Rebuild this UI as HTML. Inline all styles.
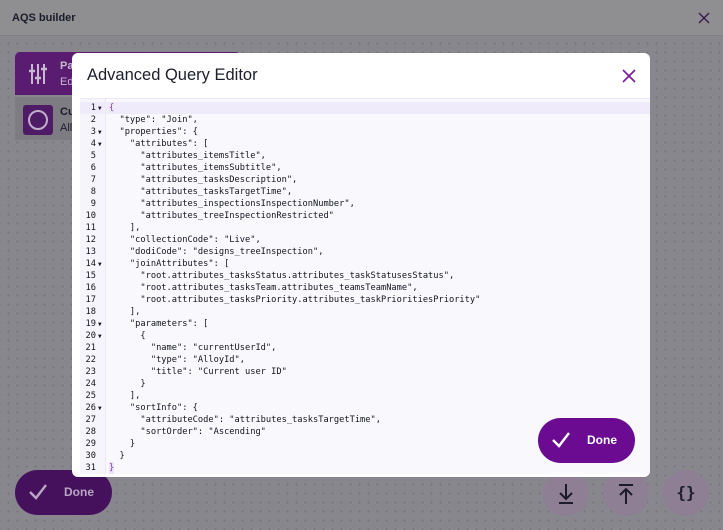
<!DOCTYPE html>
<html><head><meta charset="utf-8"><style>
*{margin:0;padding:0;box-sizing:border-box}
body{width:723px;height:530px;overflow:hidden;position:relative;font-family:"Liberation Sans",sans-serif;background-color:#88878d;background-image:radial-gradient(circle,#75747a 0.8px,transparent 1.1px);background-size:9px 9px;background-position:4px 3px}
.hdr{position:absolute;left:0;top:0;width:723px;height:36px;background:#8f8f92;border-bottom:1px solid #7f7e84}
.hdr .t{position:absolute;left:12px;top:12px;font-size:11px;font-weight:bold;color:#1b1b2b}
.card1{position:absolute;left:15px;top:52px;width:226px;height:43px;background:#5a1c70;border-radius:5px 5px 0 0}
.card2{position:absolute;left:15px;top:97px;width:226px;height:43px;background:#7d7c82}
.modal{position:absolute;left:72px;top:53px;width:578px;height:424px;background:#fff;border-radius:6px;overflow:hidden}
.modal .title{position:absolute;left:15px;top:13px;font-size:16.5px;color:#1d1d2b}
.code{position:absolute;left:8px;top:45px;width:570px;height:376px;background:#f8f8fd;border-top:1px solid #ece8f6}
.gut{position:absolute;left:0;top:0;width:26px;height:100%;background:#f6f5fb;border-right:1px solid #ebe8f3}
.ln{position:absolute;left:0;width:570px;height:12px;font-family:"DejaVu Sans Mono",monospace;font-size:8.7px;line-height:12px;color:#14141f;white-space:pre}
.ln .n{display:inline-block;width:16px;text-align:right}
.ln .a{display:inline-block;width:9px;font-size:6px;padding-left:2px}
.ln .c{position:absolute;left:29px}
.hl{background:#f0ebfa}
.btn{position:absolute;border-radius:23px;color:#fff;font-weight:bold;font-size:12px}
.circ{position:absolute;top:470px;width:46px;height:46px;border-radius:50%;background:#8e7f95;color:#1b1b2b;text-align:center}
</style></head><body>
<div class="hdr"><div class="t">AQS builder</div>
<svg style="position:absolute;left:698px;top:12px" width="12" height="12"><path d="M1 1L11 11M11 1L1 11" stroke="#3c1650" stroke-width="1.4"/></svg></div>
<div class="card1">
<svg style="position:absolute;left:13px;top:11px" width="20" height="22" stroke="#c9b8d2" stroke-width="2" fill="none"><path d="M4 1V21M10 1V21M16 1V21"/><path d="M1 8H7M7 15H13M13 6H19" stroke-width="2.4"/></svg>
<div style="position:absolute;left:45px;top:8px;color:#c8b9d0;font-size:11px;font-weight:bold">Pa</div>
<div style="position:absolute;left:45px;top:24px;color:#c8b9d0;font-size:11px">Ed</div></div>
<div class="card2">
<div style="position:absolute;left:8px;top:8px;width:30px;height:30px;background:#4f1b66;border-radius:3px"></div>
<div style="position:absolute;left:13px;top:13px;width:20px;height:20px;border:2px solid #c0aecb;border-radius:50%"></div>
<div style="position:absolute;left:45px;top:9px;color:#1b1b2b;font-size:11px;font-weight:bold">Cu</div>
<div style="position:absolute;left:45px;top:25px;color:#1b1b2b;font-size:11px">All</div></div>

<div class="btn" style="left:15px;top:470px;width:97px;height:45px;background:#46115c">
<svg style="position:absolute;left:13px;top:13px" width="20" height="18"><path d="M2 9L8 15L18 2" stroke="#b9a6c4" stroke-width="2.4" fill="none"/></svg>
<span style="position:absolute;left:49px;top:15px;color:#b9a6c4">Done</span></div>
<div class="circ" style="left:543px"><svg width="46" height="46"><path d="M23 14V29M17 23L23 29L29 23M16 33H30" stroke="#1b1b2b" stroke-width="2" fill="none"/></svg></div>
<div class="circ" style="left:603px"><svg width="46" height="46"><path d="M23 32V17M17 23L23 17L29 23M16 13H30" stroke="#1b1b2b" stroke-width="2" fill="none" transform="translate(0,2)"/></svg></div>
<div class="circ" style="left:663px;line-height:46px;font-size:16px;font-weight:bold;font-family:'DejaVu Sans Mono',monospace">{}</div>

<div class="modal">
<div class="title">Advanced Query Editor</div>
<svg style="position:absolute;left:550px;top:16px" width="14" height="14"><path d="M1 1L13 13M13 1L1 13" stroke="#7a1aa0" stroke-width="1.6"/></svg>
<div class="code"><div class="gut"></div>
<div class="ln hl" style="top:3px"><span class="n">1</span><span class="a">▼</span><span class="c" style="color:#7a3aa0">{</span></div>
<div class="ln" style="top:15px"><span class="n">2</span><span class="c">  "type": "Join",</span></div>
<div class="ln" style="top:27px"><span class="n">3</span><span class="a">▼</span><span class="c">  "properties": {</span></div>
<div class="ln" style="top:39px"><span class="n">4</span><span class="a">▼</span><span class="c">    "attributes": [</span></div>
<div class="ln" style="top:51px"><span class="n">5</span><span class="c">      "attributes_itemsTitle",</span></div>
<div class="ln" style="top:63px"><span class="n">6</span><span class="c">      "attributes_itemsSubtitle",</span></div>
<div class="ln" style="top:75px"><span class="n">7</span><span class="c">      "attributes_tasksDescription",</span></div>
<div class="ln" style="top:87px"><span class="n">8</span><span class="c">      "attributes_tasksTargetTime",</span></div>
<div class="ln" style="top:99px"><span class="n">9</span><span class="c">      "attributes_inspectionsInspectionNumber",</span></div>
<div class="ln" style="top:111px"><span class="n">10</span><span class="c">      "attributes_treeInspectionRestricted"</span></div>
<div class="ln" style="top:123px"><span class="n">11</span><span class="c">    ],</span></div>
<div class="ln" style="top:135px"><span class="n">12</span><span class="c">    "collectionCode": "Live",</span></div>
<div class="ln" style="top:147px"><span class="n">13</span><span class="c">    "dodiCode": "designs_treeInspection",</span></div>
<div class="ln" style="top:159px"><span class="n">14</span><span class="a">▼</span><span class="c">    "joinAttributes": [</span></div>
<div class="ln" style="top:171px"><span class="n">15</span><span class="c">      "root.attributes_tasksStatus.attributes_taskStatusesStatus",</span></div>
<div class="ln" style="top:183px"><span class="n">16</span><span class="c">      "root.attributes_tasksTeam.attributes_teamsTeamName",</span></div>
<div class="ln" style="top:195px"><span class="n">17</span><span class="c">      "root.attributes_tasksPriority.attributes_taskPrioritiesPriority"</span></div>
<div class="ln" style="top:207px"><span class="n">18</span><span class="c">    ],</span></div>
<div class="ln" style="top:219px"><span class="n">19</span><span class="a">▼</span><span class="c">    "parameters": [</span></div>
<div class="ln" style="top:231px"><span class="n">20</span><span class="a">▼</span><span class="c">      {</span></div>
<div class="ln" style="top:243px"><span class="n">21</span><span class="c">        "name": "currentUserId",</span></div>
<div class="ln" style="top:255px"><span class="n">22</span><span class="c">        "type": "AlloyId",</span></div>
<div class="ln" style="top:267px"><span class="n">23</span><span class="c">        "title": "Current user ID"</span></div>
<div class="ln" style="top:279px"><span class="n">24</span><span class="c">      }</span></div>
<div class="ln" style="top:291px"><span class="n">25</span><span class="c">    ],</span></div>
<div class="ln" style="top:303px"><span class="n">26</span><span class="a">▼</span><span class="c">    "sortInfo": {</span></div>
<div class="ln" style="top:315px"><span class="n">27</span><span class="c">      "attributeCode": "attributes_tasksTargetTime",</span></div>
<div class="ln" style="top:327px"><span class="n">28</span><span class="c">      "sortOrder": "Ascending"</span></div>
<div class="ln" style="top:339px"><span class="n">29</span><span class="c">    }</span></div>
<div class="ln" style="top:351px"><span class="n">30</span><span class="c">  }</span></div>
<div class="ln" style="top:363px"><span class="n">31</span><span class="c" style="color:#7a3aa0;background:#ece4f6">}</span></div>
</div>
<div class="btn" style="left:466px;top:365px;width:97px;height:45px;background:#6a0b92">
<svg style="position:absolute;left:13px;top:13px" width="20" height="18"><path d="M2 9L8 15L18 2" stroke="#fff" stroke-width="2.4" fill="none"/></svg>
<span style="position:absolute;left:49px;top:15px">Done</span></div>
</div>
</body></html>
